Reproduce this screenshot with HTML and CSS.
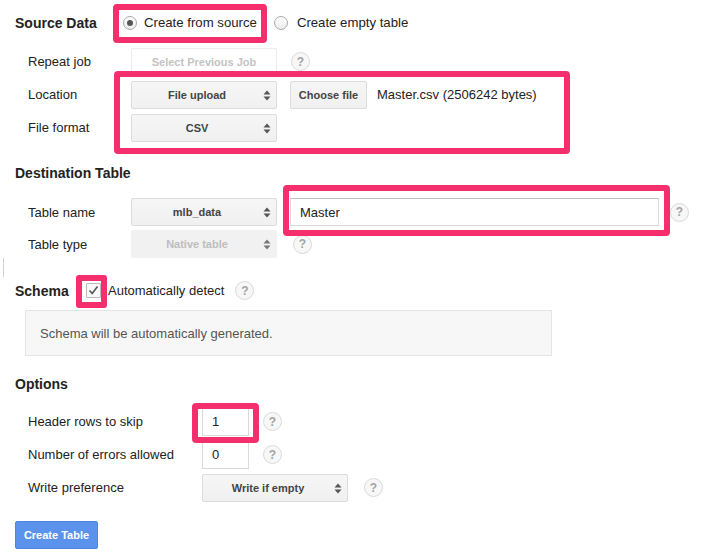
FILE: index.html
```html
<!DOCTYPE html>
<html>
<head>
<meta charset="utf-8">
<link rel="stylesheet" href="styles.css">
</head>
<body>
<div class="page">
  <div class="head-row">
    <h2 class="head head-src">Source Data</h2>
    <label class="radio-opt"><span class="radio checked"></span>Create from source</label>
    <label class="radio-opt second"><span class="radio"></span>Create empty table</label>
  </div>
  <div class="row">
    <span class="label">Repeat job</span>
    <span class="select ghost">Select Previous Job</span>
    <span class="help help-14">?</span>
  </div>
  <div class="row">
    <span class="label">Location</span>
    <span class="select">File upload<svg class="arr" width="8" height="13" viewBox="0 0 8 13"><path d="M4 1.5L7.5 5.5H0.5Z M4 11.5L7.5 7.5H0.5Z" fill="#555"/></svg></span>
    <span class="btn-file">Choose file</span>
    <span class="file-name">Master.csv (2506242 bytes)</span>
  </div>
  <div class="row">
    <span class="label">File format</span>
    <span class="select">CSV<svg class="arr" width="8" height="13" viewBox="0 0 8 13"><path d="M4 1.5L7.5 5.5H0.5Z M4 11.5L7.5 7.5H0.5Z" fill="#555"/></svg></span>
  </div>

  <div class="head-row dest">
    <h2 class="head">Destination Table</h2>
  </div>
  <div class="row row32 first-dest">
    <span class="label">Table name</span>
    <span class="select">mlb_data<svg class="arr" width="8" height="13" viewBox="0 0 8 13"><path d="M4 1.5L7.5 5.5H0.5Z M4 11.5L7.5 7.5H0.5Z" fill="#555"/></svg></span>
    <span class="text-input wide">Master</span>
    <span class="help help-11">?</span>
  </div>
  <div class="row row32">
    <span class="label">Table type</span>
    <span class="select disabled">Native table<svg class="arr" width="8" height="13" viewBox="0 0 8 13"><path d="M4 1.5L7.5 5.5H0.5Z M4 11.5L7.5 7.5H0.5Z" fill="#777"/></svg></span>
    <span class="help help-16">?</span>
  </div>

  <div class="head-row schema">
    <h2 class="head head-schema">Schema</h2>
    <span class="checkbox"><svg width="13" height="13" viewBox="0 0 13 13"><path d="M2.5 6.5L5.2 9.5L10.5 2.5" fill="none" stroke="#555" stroke-width="1.6"/></svg></span>
    <span class="check-label">Automatically detect</span>
    <span class="help help-11">?</span>
  </div>
  <div class="schema-box">Schema will be automatically generated.</div>

  <div class="head-row options">
    <h2 class="head">Options</h2>
  </div>
  <div class="opt-rows">
    <div class="row">
      <span class="label label-opt">Header rows to skip</span>
      <span class="text-input small">1</span>
      <span class="help help-14">?</span>
    </div>
    <div class="row">
      <span class="label label-opt">Number of errors allowed</span>
      <span class="text-input small">0</span>
      <span class="help help-14">?</span>
    </div>
    <div class="row">
      <span class="label label-opt">Write preference</span>
      <span class="select">Write if empty<svg class="arr" width="8" height="13" viewBox="0 0 8 13"><path d="M4 1.5L7.5 5.5H0.5Z M4 11.5L7.5 7.5H0.5Z" fill="#555"/></svg></span>
      <span class="help help-16">?</span>
    </div>
  </div>
  <div class="actions">
    <span class="btn-primary">Create Table</span>
  </div>
</div>

<div class="marks">
  <span class="mark m1"></span>
  <span class="mark m2"></span>
  <span class="mark m3"></span>
  <span class="mark m4"></span>
  <span class="mark m5"></span>
  <span class="edge-line"></span>
</div>
</body>
</html>
```

FILE: styles.css
```css
* { box-sizing: border-box; }
html, body { margin: 0; padding: 0; background: #fff; }
body {
  font-family: "Liberation Sans", Arial, Helvetica, sans-serif;
  font-size: 13px;
  color: #222;
  position: relative;
  width: 702px;
  height: 557px;
  overflow: hidden;
}
.page { padding-left: 15px; }

.head-row {
  display: flex;
  align-items: center;
  height: 45px;
}
.head {
  margin: 0;
  font-size: 14px;
  font-weight: bold;
  color: #222;
}
.head-src { width: 108px; }
.radio-opt {
  display: flex;
  align-items: center;
  font-size: 13.2px;
  color: #222;
}
.radio-opt.second { margin-left: 17px; }
.radio {
  width: 14px;
  height: 14px;
  border-radius: 50%;
  border: 1px solid #a9a9a9;
  background: linear-gradient(#ffffff, #ececec);
  margin-right: 7px;
  display: flex;
  align-items: center;
  justify-content: center;
}
.radio.checked::after {
  content: "";
  width: 6px;
  height: 6px;
  border-radius: 50%;
  background: #555;
}
.radio-opt.second .radio { margin-right: 9px; }

.row {
  display: flex;
  align-items: center;
  height: 33px;
  padding-left: 13px;
}
.row32 { height: 32px; }
.label { width: 103px; color: #222; }
.label-opt { width: 174px; }

.select {
  position: relative;
  width: 146px;
  height: 28px;
  border: 1px solid #dcdcdc;
  border-radius: 2px;
  background: linear-gradient(#f6f6f6, #f0f0f0);
  font-size: 11px;
  font-weight: bold;
  color: #444;
  display: flex;
  align-items: center;
  justify-content: center;
  padding-right: 14px;
}
.select .arr {
  position: absolute;
  right: 5px;
  top: 7px;
}
.select.ghost {
  background: #fff;
  border-color: #ececec;
  color: #c3c3c3;
  padding-right: 0;
}
.select.disabled {
  background: #f1f1f1;
  border-color: #f1f1f1;
  color: #bdbdbd;
}

.help {
  width: 19px;
  height: 19px;
  border-radius: 50%;
  border: 1px solid #dadada;
  background: #f7f7f7;
  color: #a3a3a3;
  font-size: 12px;
  font-weight: bold;
  display: flex;
  align-items: center;
  justify-content: center;
  flex: none;
}
.help-14 { margin-left: 14px; }
.help-11 { margin-left: 11px; }
.help-16 { margin-left: 16px; }

.btn-file {
  margin-left: 13px;
  width: 77px;
  height: 28px;
  border: 1px solid #dcdcdc;
  border-radius: 2px;
  background: linear-gradient(#f6f6f6, #f0f0f0);
  font-size: 11px;
  font-weight: bold;
  color: #444;
  display: flex;
  align-items: center;
  justify-content: center;
}
.file-name { margin-left: 10px; color: #222; }

.dest { margin-top: 14px; height: 30px; }
.first-dest { margin-top: 8px; }

.text-input {
  height: 28px;
  border: 1px solid #d9d9d9;
  border-top-color: #c0c0c0;
  background: #fff;
  display: flex;
  align-items: center;
  padding-left: 9px;
  color: #222;
}
.text-input.wide { width: 369px; margin-left: 13px; }
.text-input.small { width: 47px; }

.schema { margin-top: 14px; height: 33px; }
.head-schema { width: 71px; }
.checkbox {
  width: 15px;
  height: 15px;
  border: 1px solid #b9b9b9;
  border-radius: 1px;
  background: #f8f8f8;
  display: flex;
  align-items: center;
  justify-content: center;
  margin-right: 7px;
}
.check-label { color: #222; }

.schema-box {
  margin-top: 3px;
  margin-left: 10px;
  width: 527px;
  height: 46px;
  background: #f7f7f7;
  border: 1px solid #e4e4e4;
  display: flex;
  align-items: center;
  padding-left: 14px;
  color: #555;
}

.options { margin-top: 14px; height: 28px; }
.opt-rows { margin-top: 7px; }

.actions { margin-top: 17px; display: flex; }
.btn-primary {
  width: 83px;
  height: 28px;
  border: 1px solid #4c87e6;
  border-radius: 2px;
  background: #5b93ec;
  color: #fff;
  font-size: 11px;
  font-weight: bold;
  display: flex;
  align-items: center;
  justify-content: center;
}

/* annotation highlights drawn over the form */
.mark {
  position: absolute;
  border: 6px solid #f52f6e;
  border-radius: 4px;
}
.m1 { left: 113px; top: 4px; width: 154px; height: 39px; }
.m2 { left: 114px; top: 71px; width: 456px; height: 83px; }
.m3 { left: 283px; top: 185px; width: 387px; height: 51px; }
.m4 { left: 76px; top: 275px; width: 31px; height: 33px; border-radius: 3px; }
.m5 { left: 192px; top: 403px; width: 67px; height: 40px; }
.edge-line {
  position: absolute;
  left: 3px;
  top: 258px;
  width: 1px;
  height: 19px;
  background: #d0d0d0;
}
```
